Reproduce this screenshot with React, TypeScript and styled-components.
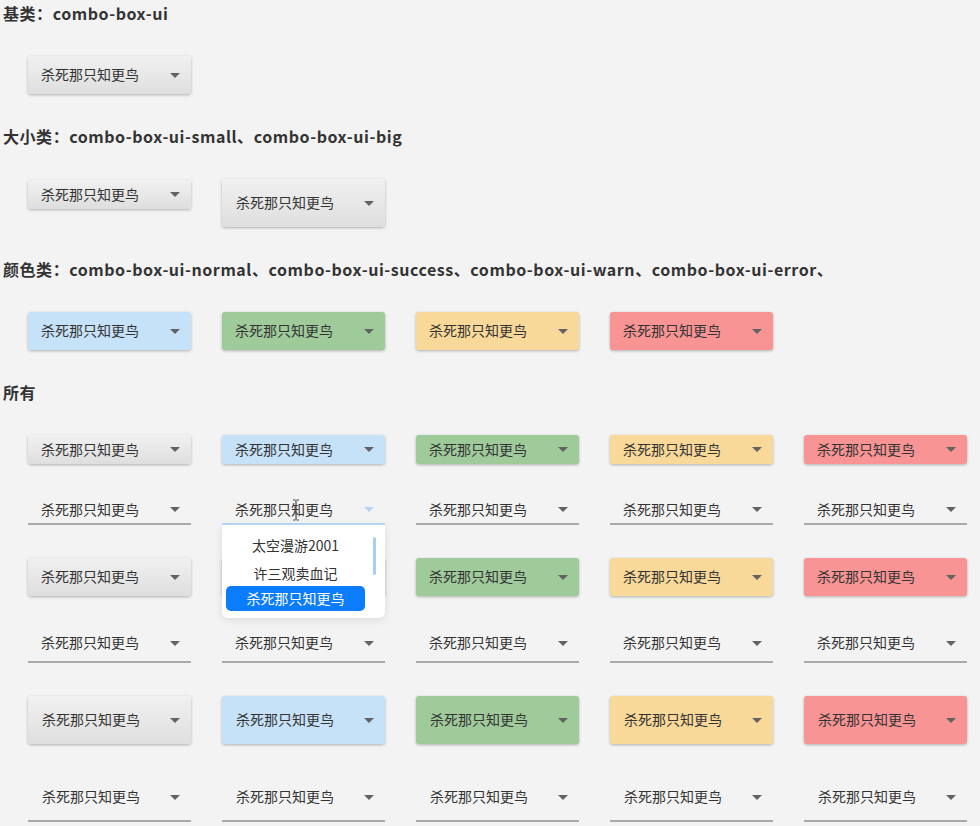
import React from "react";
import styled, { createGlobalStyle, css } from "styled-components";

const GlobalStyle = createGlobalStyle`
  html, body {
    margin: 0;
    padding: 0;
    background: #f3f3f3;
  }
  body {
    font-family: "Noto Sans CJK SC", "Noto Sans", sans-serif;
    color: #333;
  }
`;

type Size = "small" | "normal" | "big";
type Tone = "base" | "normal" | "success" | "warn" | "error";

const heights: Record<Size, number> = { small: 29, normal: 38, big: 48 };

const tones: Record<Tone, string> = {
  base: "linear-gradient(to bottom, #f1f1f1, #dedede)",
  normal: "#c6e2f8",
  success: "#9fcb9b",
  warn: "#f8d999",
  error: "#f89494",
};

const Page = styled.div`
  display: flex;
  flex-direction: column;
  padding: 2px 0 0 3px;
  min-height: 826px;
  box-sizing: border-box;
`;

const Heading = styled.h3<{ $mt?: number }>`
  margin: ${(p) => p.$mt ?? 0}px 0 0 0;
  font-size: 16px;
  line-height: 22px;
  padding-bottom: 2px;
  font-weight: 700;
  letter-spacing: 0.55px;
  color: #333;
  white-space: nowrap;
`;

const Row = styled.div<{ $mt: number }>`
  display: flex;
  align-items: flex-start;
  gap: 31px;
  margin-top: ${(p) => p.$mt}px;
  padding-left: 25px;
`;

const Combo = styled.div<{
  $size: Size;
  $tone: Tone;
  $line?: boolean;
  $focus?: boolean;
  $mt?: number;
}>`
  position: relative;
  box-sizing: border-box;
  width: 163px;
  height: ${(p) => heights[p.$size]}px;
  margin-top: ${(p) => p.$mt ?? 0}px;
  display: flex;
  align-items: center;
  justify-content: space-between;
  padding: 0 11px 2px ${(p) => (p.$size === "big" ? 14 : 13)}px;
  font-size: 14px;
  color: #333;
  cursor: pointer;
  ${(p) =>
    p.$line
      ? css`
          background: transparent;
          border-bottom: 2px solid ${p.$focus ? "#b9d9f8" : "#aaaaaa"};
        `
      : css`
          background: ${tones[p.$tone]};
          border-radius: 3px;
          box-shadow: 0 1px 3px rgba(0, 0, 0, 0.28);
        `}
`;

const Label = styled.span`
  line-height: 20px;
  white-space: nowrap;
`;

const Arrow = styled.span<{ $light?: boolean }>`
  width: 0;
  height: 0;
  margin-top: 2px;
  border-left: 5px solid transparent;
  border-right: 5px solid transparent;
  border-top: 5px solid ${(p) => (p.$light ? "#b3d4f2" : "#636363")};
`;

const Panel = styled.div`
  position: absolute;
  left: 0;
  top: 100%;
  margin-top: 2px;
  width: 163px;
  box-sizing: border-box;
  padding: 6px 20px 7px 4px;
  background: #ffffff;
  border-radius: 0 0 6px 6px;
  box-shadow: 0 2px 8px rgba(0, 0, 0, 0.1);
  z-index: 5;
  display: flex;
  flex-direction: column;
`;

const Option = styled.div<{ $selected?: boolean }>`
  text-align: center;
  font-size: 14px;
  color: #333;
  line-height: 28px;
  ${(p) =>
    p.$selected &&
    css`
      margin-top: -1px;
      line-height: 25px;
      background: #0b7cfb;
      color: #ffffff;
      border-radius: 5px;
    `}
`;

const Thumb = styled.div`
  position: absolute;
  left: 151px;
  top: 12px;
  width: 3px;
  height: 38px;
  border-radius: 2px;
  background: #a7cff6;
`;

const Cursor = styled.svg`
  position: absolute;
  left: 70px;
  top: 3px;
  z-index: 6;
`;

const tonesOrder: Tone[] = ["base", "normal", "success", "warn", "error"];

const TEXT = "杀死那只知更鸟";

function Box(props: {
  size: Size;
  tone: Tone;
  line?: boolean;
  mt?: number;
}) {
  return (
    <Combo $size={props.size} $tone={props.tone} $line={props.line} $mt={props.mt}>
      <Label>{TEXT}</Label>
      <Arrow />
    </Combo>
  );
}

function OpenBox() {
  return (
    <Combo $size="small" $tone="normal" $line $focus>
      <Label>{TEXT}</Label>
      <Arrow $light />
      <Cursor width="8" height="22" viewBox="0 0 8 22">
        <path d="M1 1h2.5M4.5 1H7M4 1.5v19M1 21h2.5M4.5 21H7" stroke="#444" strokeWidth="1.2" fill="none" />
      </Cursor>
      <Panel>
        <Thumb />
        <Option>太空漫游2001</Option>
        <Option>许三观卖血记</Option>
        <Option $selected>{TEXT}</Option>
      </Panel>
    </Combo>
  );
}

export default function App() {
  return (
    <>
      <GlobalStyle />
      <Page>
        <Heading>基类：combo-box-ui</Heading>
        <Row $mt={30}>
          <Box size="normal" tone="base" />
        </Row>

        <Heading $mt={31}>大小类：combo-box-ui-small、combo-box-ui-big</Heading>
        <Row $mt={30}>
          <Box size="small" tone="base" mt={1} />
          <Box size="big" tone="base" />
        </Row>

        <Heading $mt={31}>
          颜色类：combo-box-ui-normal、combo-box-ui-success、combo-box-ui-warn、combo-box-ui-error、
        </Heading>
        <Row $mt={30}>
          <Box size="normal" tone="normal" />
          <Box size="normal" tone="success" />
          <Box size="normal" tone="warn" />
          <Box size="normal" tone="error" />
        </Row>

        <Heading $mt={31}>所有</Heading>
        <Row $mt={30}>
          {tonesOrder.map((t) => (
            <Box key={t} size="small" tone={t} />
          ))}
        </Row>
        <Row $mt={32}>
          {tonesOrder.map((t, i) =>
            i === 1 ? <OpenBox key={t} /> : <Box key={t} size="small" tone={t} line />
          )}
        </Row>
        <Row $mt={33}>
          {tonesOrder.map((t) => (
            <Box key={t} size="normal" tone={t} />
          ))}
        </Row>
        <Row $mt={29}>
          {tonesOrder.map((t) => (
            <Box key={t} size="normal" tone={t} line />
          ))}
        </Row>
        <Row $mt={33}>
          {tonesOrder.map((t) => (
            <Box key={t} size="big" tone={t} />
          ))}
        </Row>
        <Row $mt={30}>
          {tonesOrder.map((t) => (
            <Box key={t} size="big" tone={t} line />
          ))}
        </Row>
      </Page>
    </>
  );
}
